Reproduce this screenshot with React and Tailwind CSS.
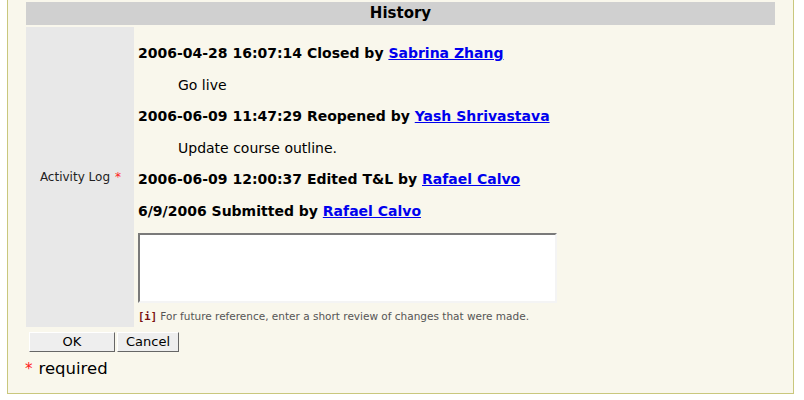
export default function App() {
  const entries = [
    { head: '2006-04-28 16:07:14 Closed by', who: 'Sabrina Zhang', note: 'Go live' },
    { head: '2006-06-09 11:47:29 Reopened by', who: 'Yash Shrivastava', note: 'Update course outline.' },
    { head: '2006-06-09 12:00:37 Edited T&L by', who: 'Rafael Calvo' },
    { head: '6/9/2006 Submitted by', who: 'Rafael Calvo' },
  ];

  return (
    <div className="w-[804px] h-[400px] bg-white" style={{ fontFamily: '"DejaVu Sans", Verdana, sans-serif' }}>
      <div className="ml-[7px] w-[787px] h-[394px] bg-[#f9f7ec] border-x border-b border-[#c9c77d] pt-[2px]">
        <div className="ml-[18px] w-[749px] h-[23px] bg-[#d0d0d0] flex items-center justify-center text-[15px] font-bold text-black">
          History
        </div>

        <div className="ml-[18px] mt-[2px] flex">
          <div className="w-[108px] bg-[#e8e8e8] flex items-center justify-end pr-[13px] text-[12px] text-[#222]">
            Activity Log<span className="ml-[5px] text-[#ff2020]">*</span>
          </div>
          <div className="pl-[4px] pt-[4px] pb-[4px]">
            {entries.map((e, i) => (
              <div key={i}>
                <p className="my-[14px] text-[14px] leading-[17.6px] font-bold text-black">
                  {e.head}{' '}
                  <a href="#" className="text-[#0000ee] underline">{e.who}</a>
                </p>
                {e.note && (
                  <p className="my-[14px] pl-[40px] text-[14px] leading-[17.6px] text-black">{e.note}</p>
                )}
              </div>
            ))}
            <textarea className="block -mt-[2px] w-[419px] h-[70px] bg-white border-2 border-t-[#7a7a7a] border-l-[#7a7a7a] border-b-[#f4f4f4] border-r-[#f4f4f4] resize-none" />
            <div className="mt-[6px] text-[10.5px] leading-[14px] text-[#555]">
              <span className="text-[#7a1010] font-bold" style={{ fontFamily: '"DejaVu Sans Mono", monospace' }}>[i]</span> For future reference, enter a short review of changes that were made.
            </div>
          </div>
        </div>

        <div className="ml-[21px] mt-[5px] flex gap-[2px]">
          <button className="w-[86px] h-[20px] bg-[#eeeeee] border border-t-white border-l-white border-b-[#666] border-r-[#666] text-[13px] leading-none text-black">
            OK
          </button>
          <button className="w-[62px] h-[20px] bg-[#eeeeee] border border-t-white border-l-white border-b-[#666] border-r-[#666] text-[13px] leading-none text-black">
            Cancel
          </button>
        </div>

        <div className="ml-[17px] mt-[5px] flex items-center text-[16.5px] text-black">
          <span className="text-[#ff2020] text-[15px] mr-[6px]">*</span>required
        </div>
      </div>
    </div>
  );
}
